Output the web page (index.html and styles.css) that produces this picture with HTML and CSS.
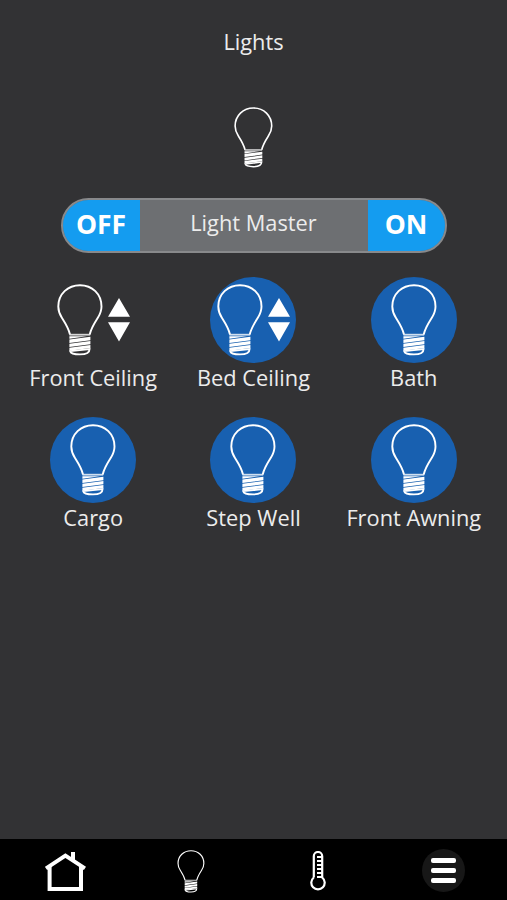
FILE: index.html
```html
<!DOCTYPE html>
<html lang="en">
<head>
    <meta charset="utf-8" />
    <meta name="viewport" content="width=device-width, initial-scale=1" />
    <title>Lights</title>
    <link rel="stylesheet" href="styles.css">
</head>
<body>
    <svg class="symbols" width="0" height="0">
        <symbol id="bulb" viewBox="0 0 46 72">
            <path class="glass" d="M13 50.5 C11.5 44 8.5 39.5 5 34 C2.3 29.8 1.3 26.5 1.3 22.5 C1.3 10 10.8 1.2 23 1.2 C35.2 1.2 44.5 10 44.5 22.5 C44.5 26.5 43.4 29.8 40.7 34 C37.2 39.5 34.2 44 32.7 50.5" />
            <path class="neck" d="M12.4 50.7 H33.2" />
            <path class="thread" d="M12.4 52.2 L30 52.2 L12.4 54.8 Z M12.4 55.6 L33.4 52.8 V56.2 L12.4 59 Z M12.4 59.8 L33.4 57 V60.2 L12.4 63 Z M12.4 63.8 L33.4 61 V64 L12.4 66.8 Z" />
            <path class="cap" d="M13.2 67.2 L32.6 65 C32.6 68.6 28.5 70.4 23 70.4 C17.5 70.4 13.6 69.2 13.2 67.2 Z" />
        </symbol>
    </svg>

    <header class="header">
        <h1>Lights</h1>
        <svg class="header-bulb"><use href="#bulb" /></svg>
    </header>

    <div class="master">
        <button type="button" class="master-btn">OFF</button>
        <span class="master-label">Light Master</span>
        <button type="button" class="master-btn">ON</button>
    </div>

    <main class="lights">
        <div class="light">
            <div class="light-icon">
                <svg class="bulb"><use href="#bulb" /></svg>
                <svg class="dimmer" viewBox="0 0 22 44"><path d="M11 0 L22 18.7 H0 Z M0 24.3 H22 L11 43.5 Z" /></svg>
            </div>
            <span class="light-name">Front Ceiling</span>
        </div>
        <div class="light on">
            <div class="light-icon">
                <svg class="bulb"><use href="#bulb" /></svg>
                <svg class="dimmer" viewBox="0 0 22 44"><path d="M11 0 L22 18.7 H0 Z M0 24.3 H22 L11 43.5 Z" /></svg>
            </div>
            <span class="light-name">Bed Ceiling</span>
        </div>
        <div class="light on">
            <div class="light-icon"><svg class="bulb"><use href="#bulb" /></svg></div>
            <span class="light-name">Bath</span>
        </div>
        <div class="light on">
            <div class="light-icon"><svg class="bulb"><use href="#bulb" /></svg></div>
            <span class="light-name">Cargo</span>
        </div>
        <div class="light on">
            <div class="light-icon"><svg class="bulb"><use href="#bulb" /></svg></div>
            <span class="light-name">Step Well</span>
        </div>
        <div class="light on">
            <div class="light-icon"><svg class="bulb"><use href="#bulb" /></svg></div>
            <span class="light-name">Front Awning</span>
        </div>
    </main>

    <nav class="navbar">
        <a href="#" class="nav-item" aria-label="Home">
            <svg class="nav-home" viewBox="0 0 41 39">
                <path class="chimney" d="M26 0 H30 V9 L26 6 Z" />
                <path class="walls" d="M4.6 15 V36.9 H36 V15" />
                <path class="roof" d="M1 16.4 L20.4 3.6 L40 16.4" />
            </svg>
        </a>
        <a href="#" class="nav-item" aria-label="Lights">
            <svg class="nav-bulb"><use href="#bulb" /></svg>
        </a>
        <a href="#" class="nav-item" aria-label="Climate">
            <svg class="nav-thermo" viewBox="0 0 16 40">
                <path d="M3.8 26.5 V5.2 A4.2 4.2 0 0 1 12.2 5.2 V26.5 A6.7 6.7 0 1 1 3.8 26.5" />
                <path class="ticks" d="M7 6 H12 M7 10 H12 M7 14 H12 M7 18 H12 M7 22 H12 M7 26 H12" />
            </svg>
        </a>
        <a href="#" class="nav-item" aria-label="Menu">
            <span class="nav-menu"><i></i><i></i><i></i></span>
        </a>
    </nav>
</body>
</html>
```

FILE: styles.css
```css
* {
    box-sizing: border-box;
}

body {
    margin: 0;
    height: 100vh;
    display: flex;
    flex-direction: column;
    align-items: center;
    overflow: hidden;
    background-color: #323234;
    color: #ececec;
    font-family: "Open Sans", "Noto Sans", sans-serif;
    font-size: 21.8px;
    line-height: 30px;
}

svg {
    display: block;
    fill: none;
    stroke: #fff;
}

.symbols {
    position: absolute;
}

/* bulb parts */
.glass {
    stroke-width: 1.9;
}

.neck {
    stroke-width: 1.8;
    opacity: 0.8;
}

.thread {
    fill: #fff;
    stroke: none;
}

.cap {
    stroke-width: 1.8;
}

.header {
    display: flex;
    flex-direction: column;
    align-items: center;
    padding-top: 27px;
}

h1 {
    margin: 0 0 49.5px;
    font-size: 21.8px;
    font-weight: 400;
}

.header-bulb {
    width: 39px;
    height: 61px;
}

/* master switch */
.master {
    display: flex;
    width: 386px;
    height: 55px;
    margin-top: 30px;
    border: 2px solid #88898b;
    border-radius: 28px;
    background-color: #6d6f72;
    overflow: hidden;
}

.master-btn {
    width: 77px;
    padding: 0 0 2px;
    border: none;
    background-color: #149cf0;
    color: #fff;
    font: 700 26.5px "Open Sans", "Noto Sans", sans-serif;
}

.master-label {
    flex: 1;
    padding-top: 8px;
    text-align: center;
}

.lights {
    flex: 1;
    display: grid;
    grid-template-columns: repeat(3, 160.3px);
    grid-auto-rows: 116px;
    row-gap: 24.4px;
    margin-top: 24px;
}

.light {
    display: flex;
    flex-direction: column;
    align-items: center;
    white-space: nowrap;
}

.light-icon {
    display: flex;
    align-items: center;
    justify-content: center;
    gap: 5px;
    width: 86px;
    height: 86px;
    border-radius: 50%;
}

.on .light-icon {
    background-color: #1860b0;
}

.bulb {
    flex: none;
    width: 46px;
    height: 72px;
}

.dimmer {
    flex: none;
    width: 22px;
    height: 44px;
    fill: #fff;
    stroke: none;
}

.navbar {
    display: flex;
    width: 100%;
    height: 61px;
    background-color: #000;
}

.nav-item {
    flex: 1;
    display: flex;
    align-items: center;
    justify-content: center;
    padding-top: 3px;
}

.nav-item:first-child {
    padding-left: 2px;
}

.nav-item:last-child {
    padding-top: 2px;
}

.nav-home {
    width: 41px;
    height: 39px;
    stroke-width: 4;
}

.chimney {
    fill: #fff;
    stroke: none;
}

.nav-bulb {
    width: 28px;
    height: 43px;
}

.nav-thermo {
    width: 16px;
    height: 40px;
    stroke-width: 2.2;
}

.ticks {
    stroke-width: 1.8;
}

.nav-menu {
    display: flex;
    flex-direction: column;
    align-items: center;
    justify-content: center;
    gap: 5px;
    width: 43px;
    height: 43px;
    border-radius: 50%;
    background-color: #171717;
}

.nav-menu i {
    width: 25px;
    height: 5px;
    border-radius: 2px;
    background-color: #fff;
}
```
